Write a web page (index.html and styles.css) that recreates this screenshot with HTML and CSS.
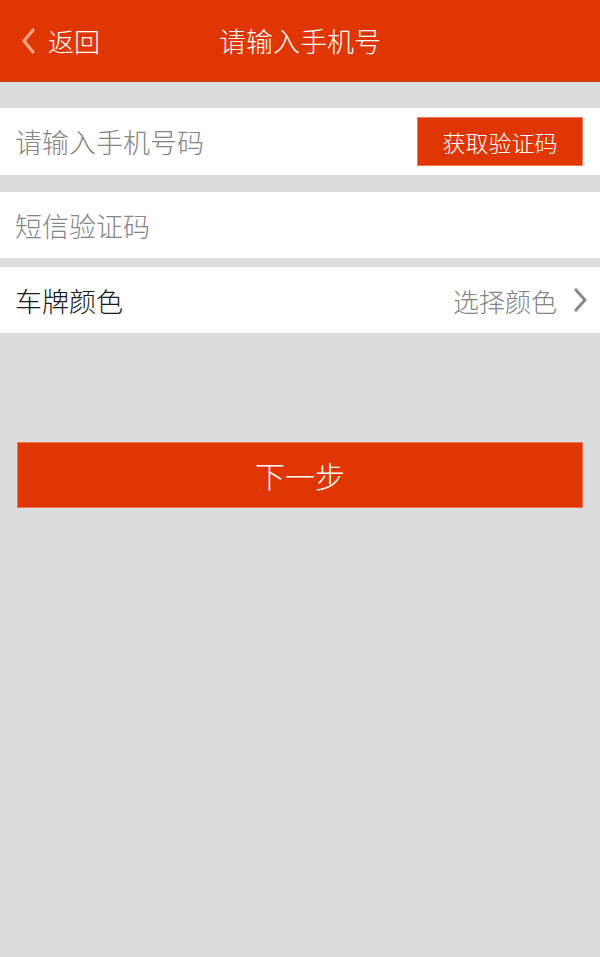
FILE: index.html
```html
<!DOCTYPE html>
<html lang="zh-CN">
<head>
<meta charset="utf-8">
<title>请输入手机号</title>
<link rel="stylesheet" href="styles.css">
</head>
<body>
<header class="topbar">
  <div class="back">
    <svg class="back-icon" width="14" height="26" viewBox="0 0 14 26"><polyline points="12,2 3,13 12,24" fill="none" stroke="#f4a48c" stroke-width="3.2" stroke-linecap="round" stroke-linejoin="round"/></svg>
    <span>返回</span>
  </div>
  <h1 class="title">请输入手机号</h1>
  <div></div>
</header>
<main class="content">
  <div class="row row-phone">
    <span class="placeholder">请输入手机号码</span>
    <button class="code-btn">获取验证码</button>
  </div>
  <div class="row row-sms">
    <span class="placeholder">短信验证码</span>
  </div>
  <div class="row row-color">
    <span class="label">车牌颜色</span>
    <span class="pick">
      <span class="pick-text">选择颜色</span>
      <svg class="chev" width="14" height="30" viewBox="0 0 14 30"><polyline points="2,4 12,15 2,26" fill="none" stroke="#888" stroke-width="3" stroke-linejoin="miter"/></svg>
    </span>
  </div>
  <button class="next-btn">下一步</button>
</main>
</body>
</html>
```

FILE: styles.css
```css
* { box-sizing: border-box; }
html, body {
  margin: 0;
  padding: 0;
}
body {
  background: #dcdcdc;
  font-family: "Noto Sans CJK SC", "Noto Sans", sans-serif;
  font-weight: 300;
  height: 957px;
  overflow: hidden;
}
.topbar {
  height: 82px;
  background: #e03604;
  border-bottom: 1px solid #c23a14;
  display: grid;
  grid-template-columns: 1fr auto 1fr;
  align-items: center;
  color: #fff;
}
.back {
  display: flex;
  align-items: center;
  padding-left: 21px;
  gap: 13px;
  font-size: 26px;
}
.title {
  margin: 0;
  font-size: 27px;
  font-weight: 300;
}
.content {
  padding-top: 26px;
  display: flex;
  flex-direction: column;
}
.row {
  background: #fff;
  display: flex;
  align-items: center;
  justify-content: space-between;
  padding: 0 17px 0 15px;
  font-size: 27px;
}
.row-phone { height: 67px; }
.row-sms { height: 66px; margin-top: 17px; }
.row-color { height: 66px; margin-top: 9px; padding-right: 13px; }
.placeholder { color: #858585; }
.label { color: #1a1a1a; }
.code-btn {
  width: 166px;
  height: 49px;
  background: #e03604;
  border: 1px solid #ee7a58;
  color: #fff;
  font-family: inherit;
  font-weight: 300;
  font-size: 23px;
  padding: 0;
}
.pick {
  display: flex;
  align-items: center;
  gap: 16px;
  color: #858585;
  font-size: 26px;
}
.chev { display: block; }
.next-btn {
  margin: 109px 17px 0;
  height: 66px;
  background: #e03604;
  border: 1px solid #ec7450;
  color: #fff;
  font-family: inherit;
  font-weight: 300;
  font-size: 30px;
  padding: 0;
}
```
